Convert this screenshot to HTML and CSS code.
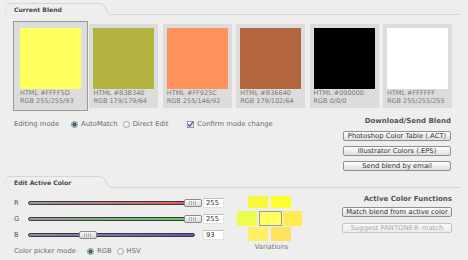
FILE: index.html
```html
<!DOCTYPE HTML>
<html>
<head>
    <meta charset='utf-8'>
    <link rel="stylesheet" href="styles.css">
</head>
<body>
    <!-- current blend -->
    <div class="sectionHead">
        <div class="tab">Current Blend</div>
        <svg class="slant" width="12" height="12" viewBox="0 0 12 12"><path d="M0 0.5 C6 0.5 6 11.5 12 11.5"/></svg>
        <div class="rule"></div>
    </div>

    <div class="swatches">
        <div class="swatch selected">
            <div class="chip" style="background:#ffff5d"></div>
            <p>HTML #FFFF5D<br>RGB 255/255/93</p>
        </div>
        <div class="swatch">
            <div class="chip" style="background:#b3b340"></div>
            <p>HTML #B3B340<br>RGB 179/179/64</p>
        </div>
        <div class="swatch">
            <div class="chip" style="background:#ff925c"></div>
            <p>HTML #FF925C<br>RGB 255/146/92</p>
        </div>
        <div class="swatch">
            <div class="chip" style="background:#b36640"></div>
            <p>HTML #B36640<br>RGB 179/102/64</p>
        </div>
        <div class="swatch">
            <div class="chip" style="background:#000000"></div>
            <p>HTML #000000<br>RGB 0/0/0</p>
        </div>
        <div class="swatch">
            <div class="chip" style="background:#ffffff"></div>
            <p>HTML #FFFFFF<br>RGB 255/255/255</p>
        </div>
    </div>

    <div class="blendFoot">
        <div class="optRow modeRow">
            <span>Editing mode</span>
            <label class="opt first"><input class="radio" type="radio" name="mode" checked>AutoMatch</label>
            <label class="opt"><input class="radio" type="radio" name="mode">Direct Edit</label>
            <label class="opt confirm">
                <span class="check"><svg width="7" height="7" viewBox="0 0 7 7"><path d="M1.2 3.4 L2.8 5.3 L5.9 0.8"/></svg></span>Confirm mode change
            </label>
        </div>
        <div class="actions">
            <div class="colHead">Download/Send Blend</div>
            <button class="btn">Photoshop Color Table (.ACT)</button>
            <button class="btn">Illustrator Colors (.EPS)</button>
            <button class="btn">Send blend by email</button>
        </div>
    </div>

    <!-- edit active color -->
    <div class="sectionHead second">
        <div class="tab">Edit Active Color</div>
        <svg class="slant" width="12" height="12" viewBox="0 0 12 12"><path d="M0 0.5 C6 0.5 6 11.5 12 11.5"/></svg>
        <div class="rule"></div>
    </div>

    <div class="editor">
        <div class="sliders">
            <div class="sliderRow">
                <span class="chan">R</span>
                <div class="slider">
                    <div class="track red"></div>
                    <div class="thumb" style="left:156px"></div>
                </div>
                <input class="num" type="text" value="255">
            </div>
            <div class="sliderRow">
                <span class="chan">G</span>
                <div class="slider">
                    <div class="track green"></div>
                    <div class="thumb" style="left:156px"></div>
                </div>
                <input class="num" type="text" value="255">
            </div>
            <div class="sliderRow">
                <span class="chan">B</span>
                <div class="slider">
                    <div class="track blue"></div>
                    <div class="thumb" style="left:51px"></div>
                </div>
                <input class="num" type="text" value="93">
            </div>
            <div class="optRow pickerRow">
                <span>Color picker mode</span>
                <label class="opt first"><input class="radio" type="radio" name="picker" checked>RGB</label>
                <label class="opt"><input class="radio" type="radio" name="picker">HSV</label>
            </div>
        </div>

        <div class="variations">
            <div class="varRow top">
                <div class="cell" style="background:#f7f83a"></div>
                <div class="cell" style="background:#ffff2e"></div>
            </div>
            <div class="varRow mid">
                <div class="cell" style="background:#eefc4c"></div>
                <div class="cell current" style="background:#ffff5d"></div>
                <div class="cell" style="background:#ffeb52"></div>
            </div>
            <div class="varRow bottom">
                <div class="cell" style="background:#fff062"></div>
                <div class="cell" style="background:#ffe25c"></div>
            </div>
            <div class="varLabel">Variations</div>
        </div>

        <div class="functions">
            <div class="colHead">Active Color Functions</div>
            <button class="btn">Match blend from active color</button>
            <button class="btn" disabled>Suggest PANTONE® match</button>
        </div>
    </div>
</body>
</html>
```

FILE: styles.css
```css
body {
    margin: 0;
    padding-top: 3px;
    width: 468px;
    height: 260px;
    overflow: hidden;
    background-color: #eeeeee;
    font-family: "DejaVu Sans", Verdana, sans-serif;
    font-size: 6.8px;
    color: #6a6a6a;
}

/* section tabs */
.sectionHead {
    display: flex;
    height: 12px;
    margin: 0 8px 0 5px;
}

.sectionHead.second {
    margin-top: 5px;
}

.tab {
    width: 95px;
    height: 12px;
    padding: 1px 0 0 8px;
    box-sizing: border-box;
    border-top: 1px solid #d6d6d6;
    border-left: 1px solid #e4e4e4;
    border-top-left-radius: 5px;
    font-size: 6.1px;
    font-weight: bold;
    line-height: 10px;
    color: #4a4a4a;
}

.slant path {
    fill: none;
    stroke: #d3d3d3;
    stroke-width: 1;
}

.rule {
    flex: 1;
    border-bottom: 1px solid #d3d3d3;
}

/* swatches */
.swatches {
    display: flex;
    gap: 4.4px;
    padding-left: 16px;
    margin-top: 9px;
}

.swatch {
    width: 61px;
    padding: 4px 4px 3px;
    background-color: #dcdcdc;
}

.swatch.selected {
    box-shadow: 0 0 0 2px #dcdcdc, 0 0 0 3px #9a9a9a;
}

.chip {
    height: 61px;
}

.swatch p {
    margin: 1px 0 0;
    font-size: 6.5px;
    line-height: 7.5px;
    color: #7a7a7a;
    white-space: nowrap;
}

/* options */
.blendFoot {
    display: flex;
    justify-content: space-between;
    align-items: flex-start;
    margin-top: 8px;
    padding: 0 17px 0 14px;
}

.optRow {
    display: flex;
    align-items: center;
    height: 10px;
    white-space: nowrap;
}

.modeRow {
    margin-top: 3px;
}

.opt {
    display: flex;
    align-items: center;
    gap: 2px;
    margin-left: 5px;
}

.opt.first {
    margin-left: 12px;
}

.opt.confirm {
    margin-left: 19px;
    gap: 3px;
}

.radio {
    appearance: none;
    -webkit-appearance: none;
    width: 7px;
    height: 7px;
    margin: 0 1px 0 0;
    box-sizing: border-box;
    border: 1px solid #a8a8a8;
    border-radius: 50%;
    background: radial-gradient(circle at 40% 40%, #ffffff, #dcdcdc);
}

.radio:checked {
    background: radial-gradient(circle, #2d86a8 0, #174a66 1.6px, #e8e8e8 2.4px);
    border-color: #8a8a8a;
}

.check {
    display: block;
    width: 7px;
    height: 7px;
    box-sizing: border-box;
    border: 1px solid #9a9a9a;
    background: linear-gradient(#ffffff, #e2e2e2);
}

.check svg {
    display: block;
    margin: -1px 0 0 -1px;
}

.check path {
    fill: none;
    stroke: #2a56a6;
    stroke-width: 1.3;
}

/* right columns */
.actions,
.functions {
    display: flex;
    flex-direction: column;
    align-items: flex-end;
    width: 110px;
}

.colHead {
    font-size: 7px;
    font-weight: bold;
    line-height: 10px;
    color: #555555;
}

.btn {
    width: 108px;
    height: 10px;
    margin: 5px 0 0;
    padding: 0;
    box-sizing: border-box;
    border: 1px solid #8e8e8e;
    border-radius: 2px;
    background: linear-gradient(#ffffff, #dedede);
    font-family: inherit;
    font-size: 6.8px;
    line-height: 8px;
    color: #333333;
    white-space: nowrap;
}

.btn:disabled {
    border-color: #c4c4c4;
    background: linear-gradient(#fafafa, #ececec);
    color: #a8a8a8;
}

/* editor */
.editor {
    display: flex;
    align-items: flex-start;
    padding: 0 16px 0 14px;
}

.sliders {
    display: flex;
    flex-direction: column;
    gap: 6px;
    margin-top: 10px;
}

.sliderRow {
    display: flex;
    align-items: center;
    height: 10px;
}

.chan {
    width: 14px;
    color: #555555;
}

.slider {
    position: relative;
    width: 175px;
    height: 10px;
}

.track {
    position: absolute;
    left: 0;
    top: 3px;
    width: 165px;
    height: 2px;
    border: 1px solid #3c3c3c;
    border-radius: 2px;
}

.track.red {
    background: linear-gradient(to right, #9a9a9a, #e25a5a);
}

.track.green {
    background: linear-gradient(to right, #9a9a9a, #5ccc5c);
}

.track.blue {
    background: linear-gradient(to right, #8a8aa0, #5a5ab8);
}

.thumb {
    position: absolute;
    top: 1px;
    width: 16px;
    height: 6px;
    border: 1px solid #8a8a8a;
    border-radius: 2px;
    background: linear-gradient(#fbfbfb, #d6d6d6);
}

.thumb::after {
    content: "";
    position: absolute;
    left: 4px;
    top: 1px;
    width: 8px;
    height: 4px;
    background: repeating-linear-gradient(90deg, #b4b4b4 0 1px, transparent 1px 2px);
}

.num {
    width: 21px;
    height: 10px;
    margin: 0;
    padding: 0 2px;
    box-sizing: border-box;
    border: 1px solid #e2e2e2;
    border-top-color: #c0c0c0;
    background: #ffffff;
    font-family: inherit;
    font-size: 6.8px;
    color: #333333;
    outline: none;
}

.pickerRow .opt.first {
    margin-left: 11px;
}

/* variations */
.variations {
    width: 65px;
    margin: 8px 0 0 13px;
}

.varRow {
    display: flex;
    justify-content: center;
}

.varRow.top {
    gap: 3px;
    height: 12px;
}

.varRow.mid {
    margin-top: 3px;
    height: 15px;
}

.varRow.bottom {
    gap: 3px;
    margin-top: 1px;
    height: 14px;
}

.cell {
    width: 20px;
}

.mid .cell:first-child {
    margin-right: 2px;
}

.mid .cell:last-child {
    width: 19px;
    margin-left: 1px;
}

.cell.current {
    width: 23px;
    box-sizing: border-box;
    border: 1px solid #9a9a9a;
}

.varLabel {
    margin: 2px 0 0 4px;
    line-height: 8px;
    text-align: center;
    color: #777777;
}

.functions {
    margin: 6px 0 0 auto;
}

.functions .btn {
    width: 110px;
    margin-top: 3px;
}

.functions .btn:disabled {
    margin-top: 6px;
}
```
